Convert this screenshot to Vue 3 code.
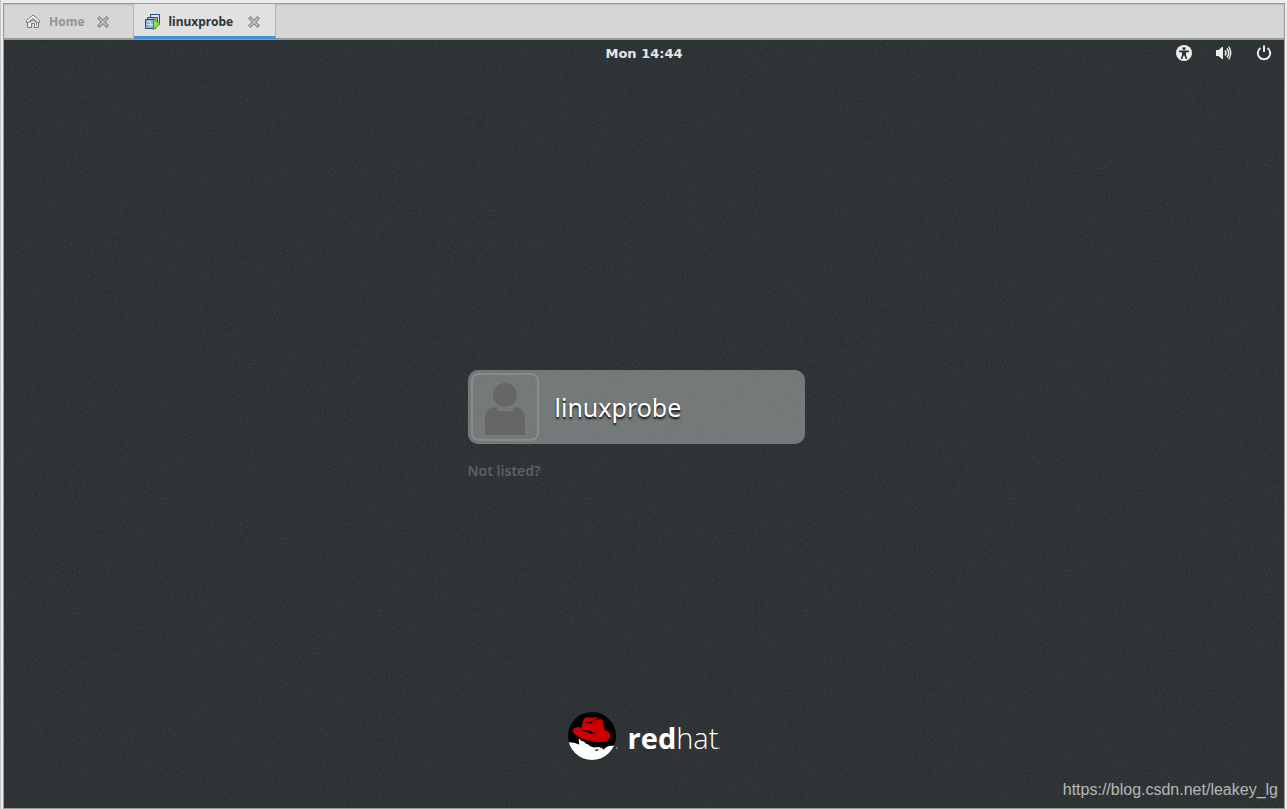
<script setup>
const tabs = [
  { name: 'Home', kind: 'home', active: false },
  { name: 'linuxprobe', kind: 'vm', active: true }
]
</script>

<template>
  <div class="window">
    <div class="frame">
      <nav class="tabs">
        <div v-for="tab in tabs" :key="tab.name" class="tab" :class="[tab.kind, { active: tab.active }]">
          <button class="tab-name" type="button">
            <svg v-if="tab.kind === 'home'" width="16" height="16" viewBox="0 0 16 16" fill="none" stroke="#777974">
              <path d="M2.500 8.500v5h4v-4h3v4h4v-5" fill="#ececea" />
              <path d="M1.500 8.500v-2L8 1l6.500 5.500v2h-1.500L8 4.500 3 8.500z" fill="#f6f6f4" />
              <path d="M4.500 8.500L8 5.800l3.500 2.700v3" />
            </svg>
            <svg v-else width="16" height="16" viewBox="0 0 16 16">
              <path d="M5.500 .500h9v8h-9z" fill="#dce8f5" stroke="#234a87" />
              <path d="M2.500 3.500h10v8h-10z" fill="#a9c5e5" stroke="#234a87" />
              <path d="M.500 5.500h10v9H.500z" fill="#8db3dc" stroke="#234a87" />
              <path d="M2 7h4v1H2zM2 10h6v1H2zM5 7h1v6H5z" fill="#cfe0f2" />
              <path d="M8.500 4.500l6.500 5.500-6.500 5.500z" fill="#85e332" stroke="#4e9a06" />
            </svg>
            <span>{{ tab.name }}</span>
          </button>
          <button class="close" type="button" :aria-label="`Close ${tab.name}`">
            <svg width="12" height="12" viewBox="0 0 12 12" fill="none">
              <path d="M2.500 2.500l7 7M9.500 2.500l-7 7" stroke="#858782" stroke-width="3.600" stroke-linecap="square" />
              <path d="M2.500 2.500l7 7M9.500 2.500l-7 7" stroke="#c3c3c0" stroke-width="1.500" stroke-linecap="square" />
            </svg>
          </button>
        </div>
      </nav>

      <div class="screen">
        <svg class="grain" aria-hidden="true">
          <filter id="grain" x="0" y="0" width="100%" height="100%">
            <feTurbulence type="fractalNoise" baseFrequency="0.6" numOctaves="2" seed="4" />
            <feColorMatrix values="0 0 0 0 0.6  0 0 0 0 0.65  0 0 0 0 0.66  0.25 0 0 0 -0.13" />
          </filter>
          <rect width="100%" height="100%" filter="url(#grain)" />
        </svg>

        <header class="topbar">
          <span></span>
          <time>Mon 14:44</time>
          <div class="status">
            <button type="button" aria-label="Accessibility">
              <svg width="16" height="16" viewBox="0 0 16 16">
                <circle cx="8" cy="8" r="8" fill="#eeeeec" />
                <circle cx="8" cy="3.500" r="1.500" fill="#2e3436" />
                <path d="M3 5.500h10v1.500l-3 .5v2.500l1.300 4H9.700L8.400 10.500h-.8L6.300 14H4.700L6 10V7.500L3 7z" fill="#2e3436" />
              </svg>
            </button>
            <button type="button" aria-label="Volume">
              <svg width="16" height="16" viewBox="0 0 16 16" fill="none" stroke="#eeeeec">
                <path d="M0 5h2.500L6 2h1v12H6l-3.500-3H0z" fill="#eeeeec" stroke="none" />
                <path d="M9 5.500q2 2.500 0 5" stroke-width="1.500" />
                <path d="M11 3.500q3.500 4.500 0 9" stroke-width="1.600" />
                <path d="M12.700 1.700q4 6.300 0 12.600" stroke-width="1.400" />
              </svg>
            </button>
            <button type="button" aria-label="Power">
              <svg width="16" height="16" viewBox="0 0 16 16" fill="none" stroke="#eeeeec" stroke-width="2">
                <path d="M4.500 3A6.200 6.200 0 1 0 11.500 3" />
                <path d="M8 .500V7" />
              </svg>
            </button>
          </div>
        </header>

        <main class="login">
          <button class="user" type="button">
            <span class="avatar">
              <svg width="40" height="52" viewBox="0 0 40 52" fill="#666">
                <circle cx="20" cy="12" r="12" />
                <path d="M0 52V36Q0 24 12 24v4h16v-4q12 0 12 12v16z" />
              </svg>
            </span>
            <span class="username">linuxprobe</span>
          </button>
          <button class="not-listed" type="button">Not listed?</button>
        </main>

        <footer class="brand">
          <svg width="48" height="48" viewBox="0 0 48 48" aria-hidden="true">
            <defs><clipPath id="disc"><circle cx="24" cy="24" r="24" /></clipPath></defs>
            <g clip-path="url(#disc)">
              <path d="M0 0h48v48H0z" fill="#000" />
              <path d="M0 30l7 1 4 1.500c1-1-1-3 0-6l2.500 2.500 2.500.5c1 2 3 3 5 3h8l4 1c1 2 1.500 4 3 4 1-2 3-3 5.500-3.500l6.500-.5v15H0z" fill="#fff" />
              <path d="M20 32.500c4-1 9-1 13 .5l1 3.500-3-1.500-5 .5c-2-.5-4-1-6-3zM26 38l5-1-2 2z" fill="#000" />
              <path d="M13.500 15.500C14.500 11 15 7 18 5.500c3-1 5 1 8 0 3-1 6-1 8 2 1.500 3 2 7 2.500 10.500 4 1 6 3 6 6 0 5-7 6.500-14 6C18 29 5 24 5 18.500c0-3 4-3.500 8.500-3z" fill="#cc0000" />
              <path d="M13.500 15.500c1 3 3 3 7 3 3 .5 4 2.500 8 2.500-4 1.500-6 1-8.500-.5-3-1-6-1-6.500-5zM17 9l4 1.500 4-1 3-2.500 4 .5-5 .500-4 3.500-4-.5zM27 6l4-.5 3 2-3-.5z" fill="#000" />
            </g>
          </svg>
          <span class="mark"></span>
          <span class="wordmark"><b>red</b>hat</span>
          <span class="mark"></span>
        </footer>
        <span class="watermark">https://blog.csdn.net/leakey_lg</span>
      </div>
    </div>
  </div>
</template>

<style>
body { background: #ededed; }
</style>

<style scoped>
.window {
  box-sizing: border-box;
  min-height: 100vh;
  display: flex;
  padding: 3px 2px 0 2px;
  background: #ededed;
  border-left: 1px solid #c4c4c4;
  font-family: "Noto Sans", "Open Sans", sans-serif;
}
.frame {
  flex: 1;
  display: flex;
  flex-direction: column;
  border: 1px solid #999;
}
button {
  display: flex;
  align-items: center;
  padding: 0;
  border: 0;
  background: none;
  color: inherit;
  font: inherit;
}
svg { display: block; flex: none; }
.tabs {
  display: flex;
  height: 34px;
  background: #d6d6d6;
  border-bottom: 2px solid #999;
  box-shadow: inset 0 1px 2px #bbb;
}
.tab {
  display: flex;
  align-items: center;
  gap: 12px;
  box-sizing: border-box;
  height: 35px;
  padding: 0 24px 0 21px;
  border-right: 1px solid #b3b3b3;
  color: #919494;
  font-size: 12px;
  font-weight: 700;
}
.tab.active {
  gap: 15px;
  padding: 3px 15px 0 11px;
  border-bottom: 3px solid #4a90d9;
  background: #e1e1e1;
  color: #2e3436;
}
.tab-name { gap: 8px; }
.screen {
  position: relative;
  flex: 1;
  display: flex;
  flex-direction: column;
  background: #2d3335;
  overflow: hidden;
}
.grain {
  position: absolute;
  inset: 0;
  width: 100%;
  height: 100%;
  pointer-events: none;
}
.topbar,
.login,
.brand { position: relative; }
.topbar {
  display: grid;
  grid-template-columns: 1fr auto 1fr;
  align-items: center;
  height: 26px;
  padding: 0 12px;
  color: #e6e6e4;
  font-family: "DejaVu Sans", sans-serif;
  font-size: 13px;
  font-weight: 700;
}
.status {
  display: flex;
  justify-content: flex-end;
  gap: 24px;
}
.login {
  flex: 1;
  display: flex;
  flex-direction: column;
  justify-content: center;
  align-self: center;
  width: 337px;
  padding-top: 72px;
  margin-right: 16px;
  gap: 18px;
}
.user {
  gap: 16px;
  padding: 3px;
  border-radius: 10px;
  background: rgba(186, 189, 187, 0.5);
  color: #fff;
  font-size: 25px;
  line-height: 32px;
  text-shadow: 0 2px 2px #111;
}
.avatar {
  box-sizing: border-box;
  display: flex;
  justify-content: center;
  align-items: flex-end;
  width: 68px;
  height: 68px;
  padding-bottom: 4px;
  border: 2px solid #8b8b8b;
  border-radius: 8px;
}
.not-listed {
  align-self: flex-start;
  color: #5d6060;
  font-size: 14px;
  line-height: 18px;
  font-weight: 600;
}
.brand {
  align-self: center;
  display: flex;
  align-items: center;
  margin-bottom: 48px;
  color: #fff;
}
.wordmark {
  margin-left: 10px;
  padding-top: 4px;
  font-family: "Open Sans", sans-serif;
  font-size: 29px;
  font-weight: 300;
  line-height: 44px;
}
.wordmark b { font-weight: 700; }
.mark {
  align-self: flex-end;
  width: 2px;
  height: 2px;
  margin-bottom: 11px;
  border-radius: 1px;
  background: #7c8182;
}
.watermark {
  position: absolute;
  right: 6px;
  bottom: 8px;
  color: #b5b8b8;
  font-family: "Liberation Sans", Arial, sans-serif;
  font-size: 16px;
  line-height: 20px;
}
</style>
